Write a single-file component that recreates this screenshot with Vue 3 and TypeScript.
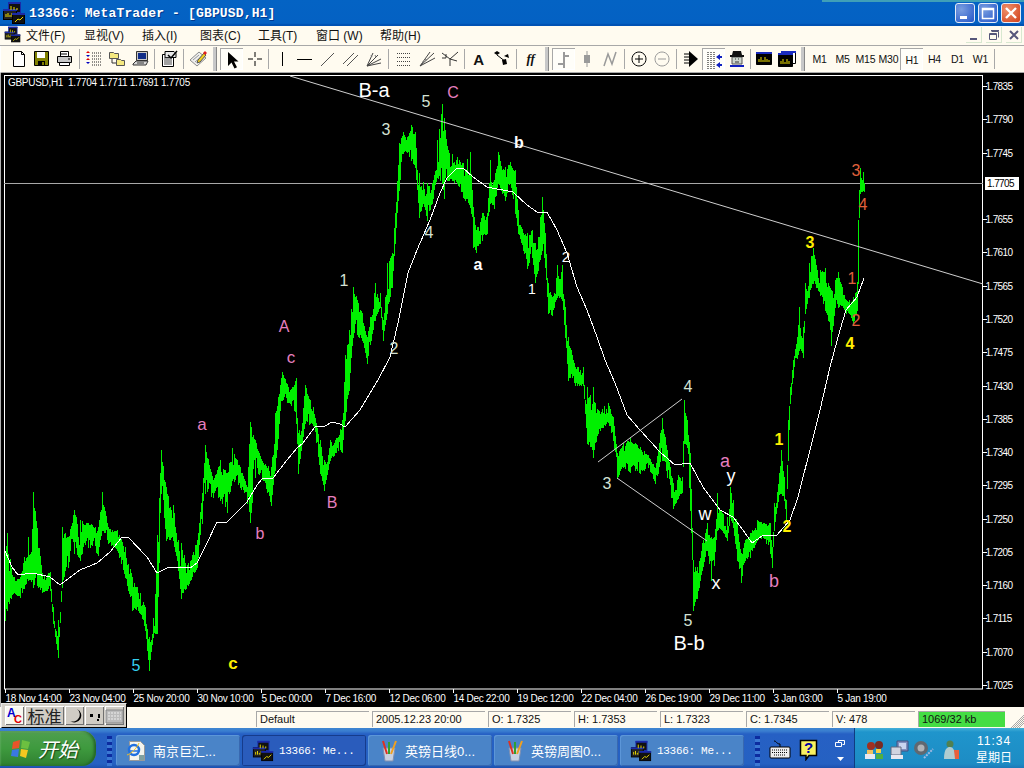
<script setup lang="ts">
type Shape = { d: string; f?: string; s?: string; w?: number; o?: number }
type Item = { k: 'sep' | 'handle' | 'btn'; w?: number; p?: Shape[]; t?: string; c?: string; on?: boolean }

// Chart envelope: [x, high y, low y]
const env: number[][] = [
  [5,552,620],[7,533,610],[13,577,593],[20,577,597],[28,537,580],[33,492,587],[42,573,592],[50,572,590],[53,607,623],[58,620,657],[62,527,587],[68,537,567],[74,510,553],[80,520,560],[88,523,547],[98,527,555],[102,492,530],[108,527,543],[117,530,550],[125,547,577],[132,577,610],[140,593,613],[145,607,630],[149,637,670],[153,618,637],[157,535,633],[161,450,493],[166,487,540],[173,505,540],[178,540,570],[181,543,598],[188,563,585],[197,540,567],[202,493,523],[205,445,493],[213,480,497],[220,460,500],[227,473,512],[232,448,480],[240,467,487],[247,487,503],[250,422,522],[255,440,477],[263,463,480],[271,467,505],[275,413,470],[282,372,400],[290,390,403],[296,378,423],[298,433,473],[305,385,423],[313,407,425],[320,440,473],[324,460,490],[330,440,460],[338,437,450],[342,420,452],[345,355,420],[349,330,390],[353,287,337],[362,313,340],[367,337,363],[375,283,320],[380,293,307],[383,320,340],[387,263,313],[392,253,287],[395,213,243],[399,143,190],[403,132,153],[407,137,152],[411,125,160],[415,132,167],[419,173,217],[423,182,203],[427,183,220],[432,183,203],[437,140,177],[442,104,183],[444,118,198],[448,150,180],[457,157,183],[463,163,197],[470,152,207],[473,207,247],[476,230,252],[482,213,240],[487,213,233],[490,160,203],[494,180,208],[498,152,183],[505,167,200],[510,162,183],[515,170,213],[518,210,233],[523,233,250],[527,233,268],[532,230,257],[535,243,282],[538,237,270],[542,197,250],[545,233,267],[548,283,313],[552,297,315],[557,265,297],[562,265,300],[565,307,337],[568,337,380],[575,367,385],[583,367,385],[587,387,443],[593,387,457],[598,410,433],[608,403,422],[613,417,440],[617,453,478],[623,443,467],[630,438,472],[635,443,470],[640,447,473],[648,455,467],[655,468,483],[662,418,460],[667,450,477],[673,483,508],[678,475,498],[682,477,492],[684,400,443],[687,420,447],[690,453,510],[693,560,610],[697,567,598],[702,543,570],[707,523,550],[711,537,580],[714,537,565],[717,493,530],[722,513,530],[727,517,540],[730,487,517],[733,500,527],[737,523,560],[741,553,582],[745,540,560],[750,533,557],[757,520,540],[763,523,537],[770,523,553],[772,547,567],[774,503,530],[777,492,507],[781,450,493],[784,477,500],[786,500,520],[788,420,460],[790,387,403],[793,360,377],[797,337,358],[799,307,350],[803,327,357],[805,283,313],[809,263,297],[813,248,283],[816,265,287],[820,270,295],[825,268,310],[828,283,320],[831,290,345],[835,280,307],[838,272,307],[842,287,305],[846,300,313],[849,300,313],[853,297,325],[857,282,310],[858,220,283],[859,190,217],[860,168,193],[863,172,190],[865,177,193]
]

let seed = 42
const rnd = () => { seed = (seed * 16807) % 2147483647; return seed / 2147483647 }

function buildBars(): string {
  let d = ''
  let walk = 0
  for (let i = 0; i < env.length - 1; i++) {
    const [x0, t0, b0] = env[i]
    const [x1, t1, b1] = env[i + 1]
    for (let x = x0; x < x1; x++) {
      const r = (x - x0) / (x1 - x0)
      const t = t0 + (t1 - t0) * r
      const b = b0 + (b1 - b0) * r
      const h = b - t
      walk = walk * 0.72 + (rnd() - 0.5) * 0.55
      const spike = rnd() < 0.1 ? 0 : 1
      const top = x === x0 ? t : t + h * (spike * Math.max(0, walk) * 1.1 + rnd() * 0.12)
      const bot = x === x0 ? b : b - h * (spike * Math.max(0, -walk) * 1.1 + rnd() * 0.12)
      d += `M${x}.5 ${Math.round(top)}V${Math.round(bot) + 1}`
    }
  }
  return d
}
const bars = buildBars()

const maLine = '5,551 12,567 18,575 33,573 50,577 60,585 80,570 97,563 110,552 122,537 128,537 147,557 157,573 167,568 177,567 190,568 197,563 207,543 217,522 227,522 237,512 247,502 257,485 263,478 273,478 287,460 297,448 303,443 315,427 325,426 332,422 340,424 345,427 360,410 378,380 390,357 398,323 408,273 417,250 430,220 440,193 447,178 457,168 463,168 473,177 487,187 513,192 527,205 537,212 547,212 557,230 567,253 577,287 587,310 597,337 605,360 615,383 627,415 640,430 660,452 675,465 690,463 703,487 720,510 733,517 743,530 752,543 762,536 777,535 790,520 798,497 810,450 820,410 830,367 840,330 846,310 857,297 864,278'

const priceLabels = ['1.7835','1.7790','1.7745','','1.7655','1.7610','1.7565','1.7520','1.7475','1.7430','1.7385','1.7340','1.7295','1.7250','1.7205','1.7160','1.7115','1.7070','1.7025']
  .map((t, i) => ({ t, y: 86 + i * 33.28 }))
  .filter((l) => l.t)

const timeLabels = ['18 Nov 14:00','23 Nov 04:00','25 Nov 20:00','30 Nov 10:00','5 Dec 00:00','7 Dec 16:00','12 Dec 06:00','14 Dec 22:00','19 Dec 12:00','22 Dec 04:00','26 Dec 19:00','29 Dec 11:00','3 Jan 03:00','5 Jan 19:00']
  .map((t, i) => ({ t, x: 5 + i * 64 }))

const W = '#ffffff', L = '#d4e2d4', P = '#e67fbf', Y = '#ffee00', R = '#e0603c'
const marks = [
  { t: 'B-a', x: 374, y: 97, c: W, s: 20 },
  { t: '5', x: 426, y: 107, c: L, s: 16 },
  { t: 'C', x: 453, y: 98, c: P, s: 16 },
  { t: '3', x: 386, y: 135, c: L, s: 16 },
  { t: 'b', x: 519, y: 148, c: W, s: 16, b: true },
  { t: '1', x: 344, y: 286, c: L, s: 16 },
  { t: '2', x: 394, y: 354, c: L, s: 16 },
  { t: '4', x: 429, y: 238, c: L, s: 16 },
  { t: 'a', x: 478, y: 270, c: W, s: 16, b: true },
  { t: '1', x: 532, y: 294, c: W, s: 14 },
  { t: '2', x: 566, y: 262, c: W, s: 15 },
  { t: 'A', x: 284, y: 332, c: P, s: 16 },
  { t: 'c', x: 291, y: 363, c: P, s: 17 },
  { t: 'a', x: 202, y: 430, c: P, s: 17 },
  { t: 'b', x: 260, y: 539, c: P, s: 16 },
  { t: 'B', x: 332, y: 508, c: P, s: 16 },
  { t: '5', x: 136, y: 671, c: '#35d0f0', s: 16 },
  { t: 'c', x: 233, y: 669, c: Y, s: 17, b: true },
  { t: '4', x: 688, y: 392, c: L, s: 16 },
  { t: '3', x: 607, y: 489, c: L, s: 16 },
  { t: '5', x: 688, y: 626, c: L, s: 16 },
  { t: 'B-b', x: 689, y: 650, c: W, s: 20 },
  { t: 'a', x: 725, y: 467, c: P, s: 18 },
  { t: 'y', x: 731, y: 482, c: W, s: 18 },
  { t: 'w', x: 705, y: 520, c: W, s: 18 },
  { t: 'x', x: 716, y: 589, c: W, s: 18 },
  { t: 'b', x: 774, y: 587, c: P, s: 18 },
  { t: '1', x: 779, y: 445, c: Y, s: 16, b: true },
  { t: '2', x: 787, y: 532, c: Y, s: 16, b: true },
  { t: '3', x: 810, y: 248, c: Y, s: 16, b: true },
  { t: '4', x: 850, y: 349, c: Y, s: 16, b: true },
  { t: '1', x: 852, y: 284, c: R, s: 16 },
  { t: '2', x: 856, y: 326, c: R, s: 16 },
  { t: '3', x: 856, y: 176, c: R, s: 16 },
  { t: '4', x: 863, y: 210, c: R, s: 16 }
]

const K = '#000000'
const ln = (d: string, s = K, w = 1): Shape => ({ d, s, w, f: 'none' })
const fl = (d: string, f: string, s?: string): Shape => ({ d, f, s, w: 1 })
const G = '#9a9a9a'

const winIcon: Shape[] = [
  fl('M1.5 3.5h15v11h-15z', '#000', '#000'),
  fl('M1 2h16v2H1z', '#1a2cc0'),
  ln('M4 12v-3M6 12v-5M8 12v-2M10 12v-5M12 12v-3M14 12v-2', '#f0e000')
]
const win2Icon: Shape[] = [
  fl('M3.5 1.5h14v12h-14z', '#fff', '#000'),
  fl('M3 1h15v2H3z', '#1a2cc0'),
  fl('M.5 4.5h14v12h-14z', '#000', '#000'),
  fl('M0 3h15v2H0z', '#1a2cc0'),
  ln('M3 14v-3M5 14v-5M7 14v-2M9 14v-5M11 14v-3', '#f0e000')
]

const items: Item[] = [
  { k: 'btn', p: [fl('M3.5 1.5h8l3 3v12h-11z', '#fff', K), ln('M11.5 1.5v3h3')] },
  { k: 'btn', p: [fl('M1.5 1.5h14v14h-14z', '#808000', K), fl('M4 2h8v6H4z', '#fff'), fl('M5 11h7v4H5z', '#000'), fl('M9 12h2v3H9z', '#808000')] },
  { k: 'btn', p: [fl('M4.5 1.5h8v5h-8z', '#fff', K), fl('M1.5 6.5h14v6h-14z', '#c8c8c8', K), fl('M3.5 12.5h10v3h-10z', '#fff', K), ln('M5 4h6M12 9h2')] },
  { k: 'sep', w: 6 },
  { k: 'btn', p: [ln('M7 3h9M7 6h9M7 9h9M7 12h9M7 15h9', '#222', 1), fl('M1 3l2-2 2 2z', '#e00000'), fl('M1 5l2 2 2-2z', '#0000c0'), fl('M1 10l2-2 2 2z', '#e00000'), fl('M1 12l2 2 2-2z', '#0000c0')], c: 'dotfirst' },
  { k: 'btn', p: [fl('M1.5 2.5h4l1 1h4v5h-9z', '#f4e880', '#555'), fl('M8.5 9.5h4l1 1h3v5h-8z', '#f4e880', '#555'), ln('M4 9v4h4', '#333')] },
  { k: 'btn', p: [fl('M5.5 1.5h11v9h-11z', '#c8c8c8', '#333'), fl('M7 3h8v6H7z', '#102c88'), fl('M2 14l3-3h12l-2 4H2z', '#d8d8d8', '#333'), ln('M6 13h7', '#333')] },
  { k: 'sep', w: 6 },
  { k: 'btn', p: [fl('M2.5 4.5h11v12h-11z', '#fff', K), fl('M5 1.5h9l2 2v4H5z', '#e8e8e8', K), ln('M4 8h8M4 10h8M4 12h8M4 14h8', '#444'), ln('M8 5l3 3 6-7', '#000', 1.5)] },
  { k: 'sep', w: 6 },
  { k: 'btn', p: [fl('M1 10l9-8 7 6-9 8z', '#eeeeee', '#8a8a8a'), ln('M4 10l6-5M6 12l6-5', '#9a9a9a'), fl('M9 10l6-7 2 2-6 7-3 1z', '#f0d020', '#555'), fl('M14 3l2-2 2 2-2 2z', '#e02020')] },
  { k: 'handle', w: 11 },
  { k: 'btn', on: true, p: [fl('M5 1v14l3.5-3.500 3 6 2.500-1.200-3-5.800h4.500z', K)] },
  { k: 'btn', p: [ln('M9 2v5M9 11v5M2 9h5M11 9h5')] },
  { k: 'sep', w: 4 },
  { k: 'btn', p: [ln('M9.5 2v14')] },
  { k: 'btn', p: [ln('M1 9.5h15')] },
  { k: 'btn', p: [ln('M2 16L15 3', '#555')] },
  { k: 'btn', p: [ln('M1 14L12 3M5 16L16 5', '#555')] },
  { k: 'btn', p: [ln('M2 16L8 3M2 16L13 5M2 16L16 9M2 16L16 13', '#444'), ln('M6 5l1 2M10 5l1 2', '#777')] },
  { k: 'sep', w: 7 },
  { k: 'btn', p: [ln('M2 3.5h14M2 7.5h14M2 11.5h14M2 15.5h14', '#444')], c: 'dotted' },
  { k: 'btn', p: [ln('M2 16L16 3M2 16L12 2M2 16L17 8', '#444'), ln('M4 12l2 1M7 9l2 1', '#777')] },
  { k: 'btn', p: [ln('M9 16V9L1 3M9 9l8-7M9 9l7 2M1 8h4M5 4v4', '#333')] },
  { k: 'sep', w: 6 },
  { k: 'btn', t: 'A', c: 'glyph-a' },
  { k: 'btn', p: [fl('M1 3l3-2 3 2-3 2z', K), ln('M4 5l9 7'), fl('M9 10l4-1 1 5-4 1z', K), fl('M11 6l4-2 1 4z', K)] },
  { k: 'sep', w: 6 },
  { k: 'btn', t: 'ff', c: 'glyph-f' },
  { k: 'handle', w: 10 },
  { k: 'btn', on: true, p: [ln('M9 1v16M9 5h5M3 13h6', G, 2)] },
  { k: 'btn', p: [ln('M9 1v16', G), fl('M6 5h6v8H6z', G)] },
  { k: 'btn', p: [ln('M3 16l4-12 4 10 4-12', G, 1.5)] },
  { k: 'sep', w: 6 },
  { k: 'btn', p: [fl('M9 2a7 7 0 1 0 .01 0z', 'none', K), ln('M5 9h8M9 5v8')] },
  { k: 'btn', p: [fl('M9 2a7 7 0 1 0 .01 0z', 'none', G), ln('M5 9h8', G)] },
  { k: 'sep', w: 6 },
  { k: 'btn', p: [ln('M2 4h5M2 7h5M2 10h5M2 13h5'), fl('M7 1l9 8-9 8z', K)] },
  { k: 'btn', on: true, p: [ln('M3 1v17M6 1v17M9 1v17', '#000'), fl('M11 6l4-3v2h2v2h-2v2z', '#1020c0'), fl('M11 14l4-3v2h2v2h-2v2z', '#1020c0')], c: 'dotfirst' },
  { k: 'btn', p: [fl('M4 7h10v7H4z', '#cdd6cd', '#555'), fl('M5 1h8l1 4h2v2H2V5h2z', '#111'), ln('M7 9h1M10 9h1M7 12h4', '#333'), ln('M2 16h14', '#1020c0', 2)] },
  { k: 'sep', w: 4 },
  { k: 'btn', p: winIcon },
  { k: 'btn', p: win2Icon },
  { k: 'handle', w: 10 },
  { k: 'btn', t: 'M1' }, { k: 'btn', t: 'M5' }, { k: 'btn', t: 'M15' }, { k: 'btn', t: 'M30' },
  { k: 'btn', t: 'H1', on: true }, { k: 'btn', t: 'H4' }, { k: 'btn', t: 'D1' }, { k: 'btn', t: 'W1' },
  { k: 'sep', w: 4 }
]

const menus = [
  { t: '文件(F)' }, { t: '显视(V)' }, { t: '插入(I)' }, { t: '图表(C)' }, { t: '工具(T)' }, { t: '窗口 (W)', wide: true }, { t: '帮助(H)' }
]
const statusCells = [
  { t: 'Default', w: 113 }, { t: '2005.12.23 20:00', w: 113 }, { t: 'O: 1.7325', w: 83 }, { t: 'H: 1.7353', w: 83 },
  { t: 'L: 1.7323', w: 83 }, { t: 'C: 1.7345', w: 83 }, { t: 'V: 478', w: 83 }
]
const tasks = [
  { t: '南京巨汇...', i: 'ie' }, { t: '13366: Me...', i: 'mt', on: true, mono: true }, { t: '英镑日线0...', i: 'cup' },
  { t: '英镑周图0...', i: 'cup' }, { t: '13366: Me...', i: 'mt', mono: true }
]
</script>

<template>
  <div class="app">
    <svg class="defs" width="0" height="0">
      <symbol id="mt" viewBox="0 0 24 24">
        <rect x="6.500" y="1.500" width="12" height="10" fill="#111" stroke="#1a2aa8" />
        <rect x="6" y="1" width="13" height="2" fill="#1a2aa8" />
        <rect x="1.500" y="8.500" width="13" height="10" fill="#222" stroke="#000" />
        <rect x="1" y="8" width="14" height="2" fill="#1a2aa8" />
        <path d="M4 16v-3M6 16v-4M8 16v-2M10 16v-4M12 16v-3" stroke="#f0e000" fill="none" />
        <rect x="10.500" y="12.500" width="12" height="10" fill="#111" stroke="#000" />
        <rect x="10" y="12" width="13" height="2" fill="#1a2aa8" />
        <path d="M13 21l3-3 2 1 3-3" stroke="#f0e000" fill="none" />
        <path d="M9 9v-4M12 9v-3M15 9v-2" stroke="#f0e000" fill="none" />
      </symbol>
      <symbol id="ie" viewBox="0 0 20 22">
        <path d="M2.500 1.500h11l4 4v15h-15z" fill="#f4f4ee" stroke="#999" />
        <circle cx="7" cy="10" r="5" fill="none" stroke="#2070e0" stroke-width="2.500" />
        <path d="M2 11h10" stroke="#2070e0" stroke-width="1.500" />
        <path d="M0 15c4-1 10-7 12-12" stroke="#f0c020" fill="none" />
        <path d="M12 15h5v5h-5z" fill="#80a0a0" />
      </symbol>
      <symbol id="cup" viewBox="0 0 20 22">
        <path d="M4 8h12l-2 13H6z" fill="#c8d0e0" stroke="#8090b0" />
        <path d="M8 14L4 1" stroke="#e03020" stroke-width="2" />
        <path d="M10 14L10 2" stroke="#30a030" stroke-width="2" />
        <path d="M12 14L17 1" stroke="#f0a020" stroke-width="2" />
      </symbol>
    </svg>

    <header class="titlebar">
      <span class="title-strip" />
      <svg class="title-icon" width="24" height="24"><use href="#mt" /></svg>
      <span class="title-text">13366: MetaTrader - [GBPUSD,H1]</span>
      <div class="winbtns">
        <button class="winbtn"><svg width="20" height="20" viewBox="0 0 20 20"><path d="M5 13h7v3H5z" fill="#fff" /></svg></button>
        <button class="winbtn"><svg width="20" height="20" viewBox="0 0 20 20"><path d="M4.500 5.500h11v10h-11zM4.500 6.500h11" fill="none" stroke="#fff" stroke-width="1.500" /></svg></button>
        <button class="winbtn close"><svg width="20" height="20" viewBox="0 0 20 20"><path d="M5 5l10 10M15 5L5 15" stroke="#fff" stroke-width="2.400" /></svg></button>
      </div>
    </header>

    <nav class="menubar">
      <svg class="menu-icon" width="17" height="17"><use href="#mt" /></svg>
      <span v-for="m in menus" :key="m.t" class="menu" :class="{ wide: m.wide }">{{ m.t }}</span>
      <div class="mdi">
        <span class="mdibtn"><svg width="14" height="14" viewBox="0 0 14 14"><path d="M3 10h7v2H3z" fill="#56567a" /></svg></span>
        <span class="mdibtn"><svg width="16" height="14" viewBox="0 0 16 14"><path d="M5.500 3.500h7v6M3.500 5.500h7v6h-7zM3 6.500h8M5 2.500h8" fill="none" stroke="#56567a" /></svg></span>
        <span class="mdibtn"><svg width="14" height="14" viewBox="0 0 14 14"><path d="M3 3l8 8M11 3l-8 8" stroke="#56567a" stroke-width="2" /></svg></span>
      </div>
    </nav>

    <div class="toolbar">
      <template v-for="(it, i) in items" :key="i">
        <span v-if="it.k === 'sep'" class="sep" :style="{ width: it.w + 'px' }" />
        <span v-else-if="it.k === 'handle'" class="handle" :style="{ width: it.w + 'px' }" />
        <span v-else class="tb" :class="[{ on: it.on }, it.c]">
          <svg v-if="it.p" width="18" height="18" viewBox="0 0 18 18">
            <path v-for="(s, j) in it.p" :key="j" :d="s.d" :fill="s.f" :stroke="s.s" :stroke-width="s.w" />
          </svg>
          <template v-else>{{ it.t }}</template>
        </span>
      </template>
    </div>

    <main class="chart">
      <svg class="plot" width="1024" height="634" viewBox="0 73 1024 634">
        <rect x="4.500" y="75.500" width="978" height="613.500" fill="none" stroke="#fff" />
        <line x1="4" y1="183.500" x2="983" y2="183.500" stroke="#a8a8a8" shape-rendering="crispEdges" />
        <path :d="bars" stroke="#00f000" fill="none" shape-rendering="crispEdges" />
        <polyline :points="maLine" fill="none" stroke="#fff" stroke-width="1" shape-rendering="crispEdges" />
        <line x1="290" y1="76" x2="983" y2="284" stroke="#cfcfcf" />
        <line x1="598" y1="462" x2="682" y2="399" stroke="#cfcfcf" />
        <line x1="617" y1="478" x2="707" y2="541" stroke="#cfcfcf" />
        <text class="ax" x="8" y="86">GBPUSD,H1&#160;&#160;1.7704 1.7711 1.7691 1.7705</text>
        <g v-for="p in priceLabels" :key="p.t">
          <line x1="983" :y1="Math.round(p.y) + 0.5" x2="987" :y2="Math.round(p.y) + 0.5" stroke="#fff" />
          <text class="ax px" x="985.500" :y="Math.round(p.y) + 4">{{ p.t }}</text>
        </g>
        <rect x="985" y="177" width="34" height="13" fill="#fff" />
        <text class="ax px" x="987" y="187" style="fill: #000">1.7705</text>
        <g v-for="l in timeLabels" :key="l.t">
          <line :x1="l.x + 0.5" y1="689" :x2="l.x + 0.5" y2="693" stroke="#fff" />
          <text class="ax" :x="l.x + 0.5" y="702">{{ l.t }}</text>
        </g>
        <text
          v-for="(m, i) in marks"
          :key="'m' + i"
          class="mark"
          :x="m.x"
          :y="m.y"
          :fill="m.c"
          :font-size="m.s"
          :font-weight="m.b ? 700 : 400"
        >{{ m.t }}</text>
      </svg>
    </main>

    <footer class="statusbar">
      <span v-for="c in statusCells" :key="c.t" class="cell" :style="{ width: c.w + 'px' }">{{ c.t }}</span>
      <span class="cell conn">1069/32 kb</span>
      <svg class="grip" width="14" height="14" viewBox="0 0 14 14"><path d="M14 1L1 14M14 5L5 14M14 9L9 14M14 3L3 14M14 7L7 14" stroke="#a8a8a8" /></svg>
    </footer>

    <div class="langbar">
      <span class="lb ac"><b class="ac-a">A</b><b class="ac-c">C</b></span>
      <span class="lb std">标准</span>
      <span class="lb"><svg width="16" height="16" viewBox="0 0 16 16"><path d="M10 1a7 7 0 0 1-7 12 7 7 0 1 0 7-12z" fill="#000" /></svg></span>
      <span class="lb"><svg width="16" height="16" viewBox="0 0 16 16"><path d="M3 6h3v3H3zM11 6h2v4h-2zM10 11h2v2h-2z" fill="#000" /></svg></span>
      <span class="lb"><svg width="19" height="16" viewBox="0 0 19 16"><path d="M1 2h17v13H1z" fill="#bbb" stroke="#888" /><path d="M3 5h13M3 8h13M3 11h13" stroke="#eee" stroke-dasharray="2 1" /></svg></span>
    </div>

    <div class="taskbar">
      <button class="start">
        <svg width="22" height="22" viewBox="0 0 22 22">
          <path d="M3 4l7-2-1 8-7 1z" fill="#e8542a" />
          <path d="M12 2l8 2-2 7-7-1z" fill="#6cc040" />
          <path d="M2 12l7-1-1 8-7-1z" fill="#3a78e0" />
          <path d="M11 11l7 1-2 8-6-2z" fill="#f4c820" />
        </svg>
        <span class="start-label">开始</span>
      </button>
      <span class="tgrip" />
      <div class="tasks">
        <button v-for="(t, i) in tasks" :key="i" class="task" :class="{ on: t.on, mono: t.mono }">
          <svg class="task-ic" width="22" height="22"><use :href="'#' + t.i" /></svg>
          <span>{{ t.t }}</span>
        </button>
      </div>
      <span class="tgrip" />
      <div class="quick">
        <svg width="22" height="20" viewBox="0 0 22 20">
          <path d="M5 1c3 0 2 3 6 3v3" fill="none" stroke="#000" />
          <rect x="1" y="7" width="20" height="11" rx="1" fill="#eee" stroke="#000" />
          <path d="M3 10h16M3 12.500h16M5 15h12" stroke="#000" stroke-dasharray="1 1" />
        </svg>
        <svg width="20" height="22" viewBox="0 0 20 22">
          <path d="M1.500 1.500h16v15H10l-3 4v-4H1.500z" fill="#f8f060" stroke="#000" stroke-width="1.500" />
          <text x="9.500" y="14" class="q">?</text>
        </svg>
        <div class="bandctl">
          <svg width="10" height="8" viewBox="0 0 10 8"><path d="M3.500 2.500v-2h6v4h-2M.5 2.500h6v4h-6z" fill="none" stroke="#fff" /></svg>
          <svg width="7" height="4" viewBox="0 0 7 4"><path d="M0 0h7L3.500 4z" fill="#fff" /></svg>
        </div>
      </div>
      <div class="tray">
        <svg width="22" height="20" viewBox="0 0 22 20">
          <circle cx="7" cy="6" r="4" fill="#a03020" /><circle cx="15" cy="5" r="4" fill="#7a2a20" />
          <path d="M3 10h6v4H3z" fill="#f0c060" /><path d="M12 9h5v4h-5z" fill="#f8d040" />
          <path d="M1 14h10v5H1z" fill="#e8e8f0" /><path d="M12 14h7v5h-7z" fill="#50b040" />
        </svg>
        <svg width="20" height="20" viewBox="0 0 20 20">
          <path d="M7 1h11v10H7z" fill="#8090c0" stroke="#405080" /><path d="M9 3h7v6H9z" fill="#c8d4f0" />
          <path d="M1 7h10v8H1z" fill="#d0d4e0" stroke="#606880" /><path d="M1 15h12v4H1z" fill="#e8e8f0" />
        </svg>
        <svg width="22" height="20" viewBox="0 0 22 20">
          <circle cx="7" cy="8" r="7" fill="#606870" /><circle cx="7" cy="8" r="3.500" fill="#b0b4b8" />
          <path d="M10 18l9-9" stroke="#a0b8e0" stroke-width="2" stroke-dasharray="2 1" />
        </svg>
        <svg width="20" height="20" viewBox="0 0 20 20">
          <circle cx="10" cy="4" r="3.500" fill="#508050" />
          <path d="M4 19c0-10 3-12 6-12s5 3 6 12z" fill="#b0ccd0" />
          <path d="M14 10h5v9h-4z" fill="#e8603c" />
        </svg>
        <div class="clock"><span>11:34</span><span class="day">星期日</span></div>
      </div>
    </div>
  </div>
</template>

<style scoped>
.app {
  position: relative;
  width: 1024px;
  height: 768px;
  overflow: hidden;
  display: flex;
  flex-direction: column;
  background: #fffbf0;
  font-family: "Liberation Sans", "Noto Sans CJK SC", sans-serif;
  color: #000;
}
.defs { position: absolute; }
button { border: 0; padding: 0; margin: 0; font: inherit; color: inherit; }

.titlebar {
  position: relative;
  flex: 0 0 26px;
  box-sizing: border-box;
  display: flex;
  align-items: center;
  padding-left: 2px;
  background: linear-gradient(#0463c4 0, #0461c3 90%, #0052b4 92%, #0052b4 100%);
}
.title-strip {
  position: absolute;
  top: 0;
  right: 0;
  width: 202px;
  height: 2px;
  background: #3f9fb8;
}
.title-icon { flex: none; }
.title-text {
  margin-left: 3px;
  font: 700 13px "Liberation Mono", monospace;
  letter-spacing: 0.15px;
  color: #fff;
  text-shadow: 1px 1px 0 #003a90;
}
.winbtns { margin-left: auto; display: flex; gap: 3px; padding-right: 3px; }
.winbtn {
  width: 20px;
  height: 20px;
  display: block;
  box-sizing: border-box;
  border: 1px solid #e4ecf8;
  border-radius: 3px;
  background: radial-gradient(circle at 30% 30%, #7a9ee0, #2456c8);
  overflow: hidden;
}
.winbtn svg { display: block; margin: -1px; }
.winbtn.close { background: radial-gradient(circle at 30% 30%, #f0906a, #d0401c); }

.menubar {
  flex: 0 0 20px;
  box-sizing: border-box;
  height: 20px;
  display: flex;
  align-items: center;
  padding: 0 0 2px 4px;
  background: #fffbf0;
  border-bottom: 1px solid #a8a8a8;
  font-size: 12px;
  color: #111;
}
.menu-icon { flex: none; margin-right: 5px; }
.menu { flex: 0 0 58px; white-space: pre; }
.menu.wide { flex-basis: 64px; }
.mdi { margin-left: auto; display: flex; gap: 4px; padding-right: 2px; margin-right: 0; }
.mdibtn {
  width: 16px;
  height: 16px;
  display: flex;
  align-items: center;
  justify-content: center;
  box-shadow: inset -1px -1px 0 #d8e8d0;
}

.toolbar {
  flex: 0 0 27px;
  box-sizing: border-box;
  display: flex;
  align-items: center;
  padding-left: 6px;
  background: #fffbf0;
  border-left: 1px solid #fff;
  border-bottom: 1px solid #a8a8a8;
}
.tb {
  flex: 0 0 23px;
  height: 22px;
  box-sizing: border-box;
  display: flex;
  align-items: center;
  justify-content: center;
  font-size: 10.5px;
  letter-spacing: -0.2px;
  color: #111;
}
.tb svg { display: block; }
.tb.on {
  background: #fffef9;
  border-top: 1px solid #a8a8a8;
  border-left: 1px solid #a8a8a8;
  box-shadow: inset -1px -1px 0 #fff;
}
.tb.dotted path { stroke-dasharray: 1 1; }
.tb.dotfirst path:first-child { stroke-dasharray: 1 1; }
.glyph-a { font-weight: 700; font-size: 15px; }
.glyph-f { font: italic 700 13px "Liberation Serif", serif; }
.sep { display: flex; justify-content: center; height: 20px; position: relative; }
.sep::after { content: ""; width: 1px; height: 100%; background: #a8a8a8; }
.handle { height: 24px; display: flex; justify-content: center; }
.handle::after { content: ""; width: 3px; height: 100%; background: #c8c8c8; border-right: 1px solid #888; }

.chart { flex: 0 0 634px; background: #000; border-left: 1px solid #b0b0b0; box-sizing: border-box; }
.plot { display: block; margin-left: -1px; }
.ax { fill: #fff; font: 10px "Liberation Sans", sans-serif; letter-spacing: -0.3px; }
.px { letter-spacing: -0.6px; }
.mark { font-family: "Liberation Sans", sans-serif; text-anchor: middle; }

.statusbar {
  flex: 0 0 21px;
  box-sizing: border-box;
  display: flex;
  gap: 3px;
  align-items: flex-end;
  padding: 0 0 1px 256px;
  background: #fffbf0;
  position: relative;
}
.cell {
  height: 16px;
  box-sizing: border-box;
  border-top: 1px solid #a8a8a8;
  border-left: 1px solid #a8a8a8;
  padding-left: 3px;
  font-size: 11px;
  line-height: 15px;
  color: #111;
  white-space: nowrap;
}
.conn { width: 87px; background: #44dd44; border-color: #a8a8a8; }
.grip { position: absolute; right: 0; bottom: 0; }

.langbar {
  position: absolute;
  left: 1px;
  top: 703px;
  width: 126px;
  height: 25px;
  box-sizing: border-box;
  display: flex;
  gap: 1px;
  padding: 2px 3px;
  background: #d4d0c8;
  border: 1px solid #000;
  border-top-color: #e8e8e8;
  border-left-color: #e8e8e8;
}
.lb {
  flex: 0 0 19px;
  display: flex;
  align-items: center;
  justify-content: center;
  background: #d0ccc4;
  box-shadow: inset 1px 1px 0 #fff, inset -1px -1px 0 #707070;
}
.ac { position: relative; background: #f8f8f0; }
.ac-a { position: absolute; left: 2px; top: 0; color: #0000d0; font: 700 12px "Liberation Sans", sans-serif; }
.ac-c { position: absolute; right: 2px; bottom: 0; color: #e00000; font: 700 11px "Liberation Sans", sans-serif; }
.std { flex: 0 0 39px; font-size: 17px; color: #222; }

.taskbar {
  flex: 0 0 40px;
  box-sizing: border-box;
  display: flex;
  align-items: stretch;
  background: linear-gradient(#3f86d0 0, #3a7ed0 3px, #2660c4 6px, #2561c2 90%, #1c50ae 100%);
}
.start {
  flex: 0 0 96px;
  margin-top: 3px;
  margin-bottom: 2px;
  box-sizing: border-box;
  display: flex;
  align-items: center;
  gap: 6px;
  padding-left: 10px;
  background: linear-gradient(#4f9f4f, #3e9a3e 50%, #2f7f30);
  border-radius: 0 14px 14px 0;
  box-shadow: inset -2px 0 3px #1f5f22, inset 0 1px 2px #88c888;
  color: #fff;
}
.start-label { font: italic 20px "Noto Sans CJK SC", sans-serif; text-shadow: 1px 1px 1px #1a4a1a; }
.tgrip {
  flex: 0 0 5px;
  margin: 8px 0 2px 11px;
  background: repeating-linear-gradient(#0c2ca0 0 3px, #3b78d4 3px 6px);
}
.tasks { display: flex; gap: 2px; margin-left: 4px; padding: 7px 0 2px; }
.task {
  width: 124px;
  display: flex;
  align-items: center;
  gap: 5px;
  box-sizing: border-box;
  padding-left: 10px;
  background: #4a84c8;
  border-radius: 3px;
  box-shadow: inset 1px 1px 0 #5c96d8, inset -1px -1px 0 #3868b0;
  color: #fff;
  font-size: 13px;
  white-space: nowrap;
  overflow: hidden;
}
.task.on { background: #2a5cbc; box-shadow: inset 1px 1px 0 #163c8c, inset -1px -1px 0 #163c8c; }
.task.mono { font: 11px "Liberation Mono", monospace; letter-spacing: -0.3px; }
.task-ic { flex: none; }
.quick { display: flex; align-items: center; gap: 8px; padding: 4px 0 0 9px; flex: 1; }
.q { font: 700 15px "Liberation Sans", sans-serif; text-anchor: middle; fill: #0000a0; }
.bandctl { display: flex; flex-direction: column; align-items: center; gap: 9px; margin-left: 8px; }
.tray {
  flex: 0 0 160px;
  box-sizing: border-box;
  display: flex;
  align-items: center;
  padding: 4px 0 0 9px;
  gap: 4px;
  background: linear-gradient(#45b0d8 0, #1f95cc 4px, #1d8cc4 90%, #1c78b8);
  border-left: 1px solid #103c80;
}
.clock {
  margin-left: auto;
  width: 60px;
  display: flex;
  flex-direction: column;
  align-items: center;
  color: #fff;
  font-size: 12px;
  line-height: 17px;
  letter-spacing: 1px;
}
.day { font-size: 12px; letter-spacing: 0; }
</style>
